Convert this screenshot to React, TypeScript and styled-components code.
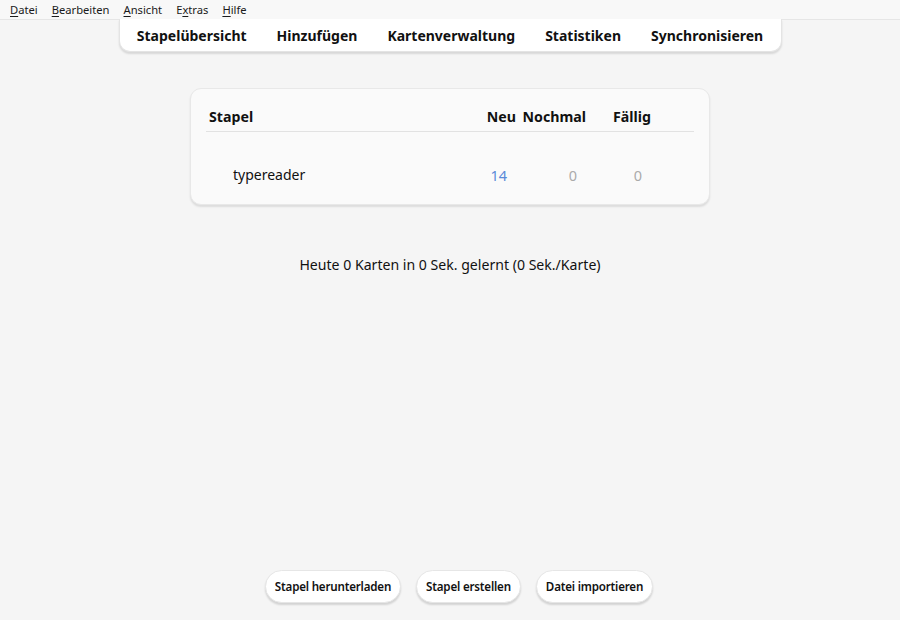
import React from "react";
import styled, { createGlobalStyle } from "styled-components";

const Global = createGlobalStyle`
  html, body { margin: 0; padding: 0; background: #f5f5f5; }
  body { font-family: "Noto Sans", "Open Sans", sans-serif; color: #111; }
  * { box-sizing: border-box; }
`;

const Page = styled.div`
  height: 620px;
  display: flex;
  flex-direction: column;
  align-items: center;
`;

const MenuBar = styled.div`
  align-self: stretch;
  height: 20px;
  padding-top: 1px;
  background: #f8f8f8;
  border-bottom: 1px solid #e6e6e6;
  display: flex;
  align-items: center;
  gap: 14px;
  padding-left: 10px;
  font-size: 11.2px;
  color: #1a1a1a;
`;

const MenuItem = styled.span`
  line-height: 18px;
  u { text-decoration-thickness: 1px; text-underline-offset: 2px; }
`;

const Toolbar = styled.div`
  width: 663px;
  height: 33px;
  margin-top: -1px;
  background: #ffffff;
  border: 1px solid #e4e4e4;
  border-top: none;
  border-radius: 0 0 11px 11px;
  box-shadow: 0 2px 2px rgba(0, 0, 0, 0.12);
  display: flex;
  align-items: center;
  justify-content: center;
  gap: 30px;
`;

const Tab = styled.span`
  font-size: 14px;
  font-weight: 700;
  color: #111;
`;

const Card = styled.div`
  margin-top: 36px;
  width: 520px;
  background: #fafafa;
  border: 1px solid #e8e8e8;
  border-radius: 11px;
  box-shadow: 0 2px 2px rgba(0, 0, 0, 0.1);
  padding: 12px 15px 12px 15px;
`;

const Row = styled.div<{ $head?: boolean }>`
  display: grid;
  grid-template-columns: 1fr 40px 70px 65px 43px;
  align-items: center;
  height: ${(p) => (p.$head ? "31px" : "60px")};
  padding-top: ${(p) => (p.$head ? "0" : "25px")};
  border-bottom: ${(p) => (p.$head ? "1px solid #e2e2e2" : "none")};
`;

const HeadCell = styled.div<{ $left?: boolean }>`
  font-size: 14.2px;
  font-weight: 700;
  text-align: ${(p) => (p.$left ? "left" : "right")};
  padding-left: ${(p) => (p.$left ? "3px" : "0")};
`;

const DeckName = styled.div`
  font-size: 14px;
  padding-left: 27px;
  color: #111;
`;

const Count = styled.div<{ $color: string }>`
  font-size: 14.5px;
  text-align: right;
  padding-right: 9px;
  color: ${(p) => p.$color};
`;

const Stats = styled.div`
  margin-top: 50px;
  font-size: 14.1px;
  color: #111;
`;

const Spacer = styled.div`
  flex: 1;
`;

const Buttons = styled.div`
  display: flex;
  gap: 15px;
  margin-bottom: 17px;
  padding-left: 18px;
`;

const Button = styled.button`
  height: 33px;
  padding: 0 9px;
  border: 1px solid #e6e6e6;
  border-radius: 17px;
  background: #ffffff;
  box-shadow: 0 2px 2px rgba(0, 0, 0, 0.14);
  font-family: inherit;
  font-size: 11.6px;
  font-weight: 600;
  letter-spacing: -0.2px;
  color: #111;
`;

const menus: [string, string][] = [
  ["D", "atei"],
  ["B", "earbeiten"],
  ["A", "nsicht"],
  ["", "Extras"],
  ["H", "ilfe"],
];

export default function App() {
  return (
    <>
      <Global />
      <Page>
        <MenuBar>
          {menus.map(([u, rest], i) =>
            u ? (
              <MenuItem key={i}>
                <u>{u}</u>
                {rest}
              </MenuItem>
            ) : (
              <MenuItem key={i}>
                E<u>x</u>tras
              </MenuItem>
            )
          )}
        </MenuBar>
        <Toolbar>
          <Tab>Stapelübersicht</Tab>
          <Tab>Hinzufügen</Tab>
          <Tab>Kartenverwaltung</Tab>
          <Tab>Statistiken</Tab>
          <Tab>Synchronisieren</Tab>
        </Toolbar>
        <Card>
          <Row $head>
            <HeadCell $left>Stapel</HeadCell>
            <HeadCell>Neu</HeadCell>
            <HeadCell>Nochmal</HeadCell>
            <HeadCell>Fällig</HeadCell>
            <div />
          </Row>
          <Row>
            <DeckName>typereader</DeckName>
            <Count $color="#5a8ad8">14</Count>
            <Count $color="#aaaaaa">0</Count>
            <Count $color="#aaaaaa">0</Count>
            <div />
          </Row>
        </Card>
        <Stats>Heute 0 Karten in 0 Sek. gelernt (0 Sek./Karte)</Stats>
        <Spacer />
        <Buttons>
          <Button>Stapel herunterladen</Button>
          <Button>Stapel erstellen</Button>
          <Button>Datei importieren</Button>
        </Buttons>
      </Page>
    </>
  );
}
